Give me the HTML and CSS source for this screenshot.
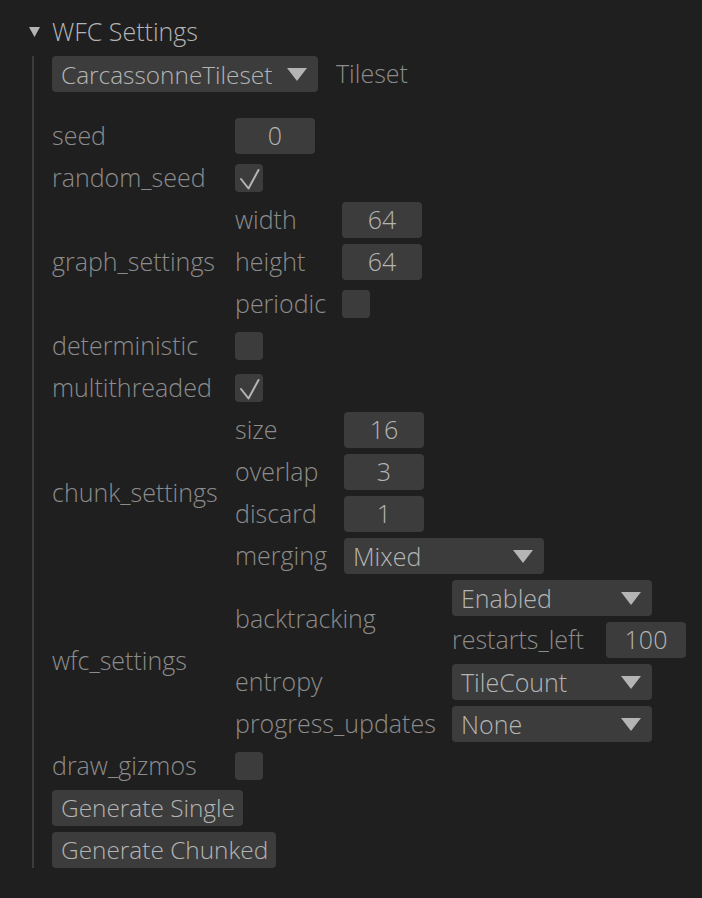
FILE: index.html
```html
<!DOCTYPE html>
<html>
<head>
<meta charset="utf-8">
<link rel="stylesheet" href="styles.css">
</head>
<body>
<div class="panel">
  <div class="header">
    <svg class="hdr-arrow" width="11" height="10" viewBox="0 0 11 10"><polygon points="0,0 11,0 5.5,10"/></svg>
    <span class="hdr-text">WFC Settings</span>
  </div>
  <div class="body">
    <div class="toprow">
      <div class="combo combo-auto"><span class="combo-text">CarcassonneTileset</span><svg class="arrow" width="20" height="13" viewBox="0 0 20 13"><polygon points="0,0 20,0 10,13"/></svg></div>
      <span class="label">Tileset</span>
    </div>
    <div class="grid outer">
      <span class="label">seed</span>
      <div class="drag">0</div>

      <span class="label">random_seed</span>
      <div class="check"><svg width="28" height="28" viewBox="0 0 28 28"><polyline points="6,15 13.5,24.5 23.5,6"/></svg></div>

      <span class="label">graph_settings</span>
      <div class="grid sub graph">
        <span class="label">width</span>
        <div class="drag">64</div>
        <span class="label">height</span>
        <div class="drag">64</div>
        <span class="label">periodic</span>
        <div class="check"></div>
      </div>

      <span class="label">deterministic</span>
      <div class="check"></div>

      <span class="label">multithreaded</span>
      <div class="check"><svg width="28" height="28" viewBox="0 0 28 28"><polyline points="6,15 13.5,24.5 23.5,6"/></svg></div>

      <span class="label">chunk_settings</span>
      <div class="grid sub chunk">
        <span class="label">size</span>
        <div class="drag">16</div>
        <span class="label">overlap</span>
        <div class="drag">3</div>
        <span class="label">discard</span>
        <div class="drag">1</div>
        <span class="label">merging</span>
        <div class="combo combo-fixed"><span class="combo-text">Mixed</span><svg class="arrow" width="20" height="13" viewBox="0 0 20 13"><polygon points="0,0 20,0 10,13"/></svg></div>
      </div>

      <span class="label">wfc_settings</span>
      <div class="grid sub wfc">
        <span class="label">backtracking</span>
        <div class="stack">
          <div class="combo combo-fixed"><span class="combo-text">Enabled</span><svg class="arrow" width="20" height="13" viewBox="0 0 20 13"><polygon points="0,0 20,0 10,13"/></svg></div>
          <div class="grid sub restarts">
            <span class="label">restarts_left</span>
            <div class="drag">100</div>
          </div>
        </div>
        <span class="label">entropy</span>
        <div class="combo combo-fixed"><span class="combo-text">TileCount</span><svg class="arrow" width="20" height="13" viewBox="0 0 20 13"><polygon points="0,0 20,0 10,13"/></svg></div>
        <span class="label">progress_updates</span>
        <div class="combo combo-fixed"><span class="combo-text">None</span><svg class="arrow" width="20" height="13" viewBox="0 0 20 13"><polygon points="0,0 20,0 10,13"/></svg></div>
      </div>

      <span class="label">draw_gizmos</span>
      <div class="check"></div>
    </div>
    <div class="buttons">
      <div class="button">Generate Single</div>
      <div class="button">Generate Chunked</div>
    </div>
  </div>
</div>
</body>
</html>
```
FILE: styles.css
```css
html, body {
  margin: 0;
  padding: 0;
  background: #1f1f1f;
}
body {
  width: 702px;
  height: 898px;
  font-family: "Open Sans", "Noto Sans", sans-serif;
  font-weight: 300;
  font-size: 25px;
  color: #8c8c8c;
}
.panel {
  padding-top: 14px;
}
.header {
  display: flex;
  align-items: center;
  height: 36px;
  padding-left: 29px;
  gap: 12px;
}
.hdr-arrow polygon { fill: #b4b4b4; }
.hdr-text {
  color: #b4b4b4;
  line-height: 35px;
  height: 36px;
}
.body {
  margin-top: 6px;
  margin-left: 32px;
  border-left: 2px solid #3c3c3c;
  padding-left: 18px;
  width: 640px;
}
.toprow {
  display: flex;
  align-items: center;
  gap: 18px;
  height: 36px;
}
.label {
  line-height: 35px;
  height: 36px;
  white-space: nowrap;
}
.combo, .drag, .button {
  height: 36px;
  background: #3c3c3c;
  border-radius: 4px;
  color: #b4b4b4;
  line-height: 35px;
  box-sizing: border-box;
  white-space: nowrap;
}
.combo {
  display: flex;
  align-items: center;
  justify-content: space-between;
  padding: 0 11px 0 9px;
}
.combo-auto { width: 266px; font-size: 24.4px; }
.combo-fixed { width: 200px; }
.arrow polygon { fill: #b4b4b4; }
.drag {
  width: 80px;
  text-align: center;
}
.check {
  width: 28px;
  height: 28px;
  background: #3c3c3c;
  border-radius: 4px;
}
.check svg { display: block; }
.check polyline {
  fill: none;
  stroke: #b4b4b4;
  stroke-width: 2;
  stroke-linecap: round;
  stroke-linejoin: round;
}
.grid {
  display: grid;
  row-gap: 6px;
  align-items: center;
  justify-items: start;
}
.outer {
  margin-top: 26px;
  grid-template-columns: 183px auto;
}
.graph { grid-template-columns: 107px auto; }
.chunk { grid-template-columns: 109px auto; }
.wfc { grid-template-columns: 217px auto; }
.restarts { grid-template-columns: 154px auto; }
.stack {
  display: flex;
  flex-direction: column;
  gap: 6px;
}
.buttons {
  margin-top: 6px;
  display: flex;
  flex-direction: column;
  align-items: flex-start;
  gap: 6px;
}
.button {
  padding: 0 8px 0 9px;
  font-size: 24.4px;
}
```
